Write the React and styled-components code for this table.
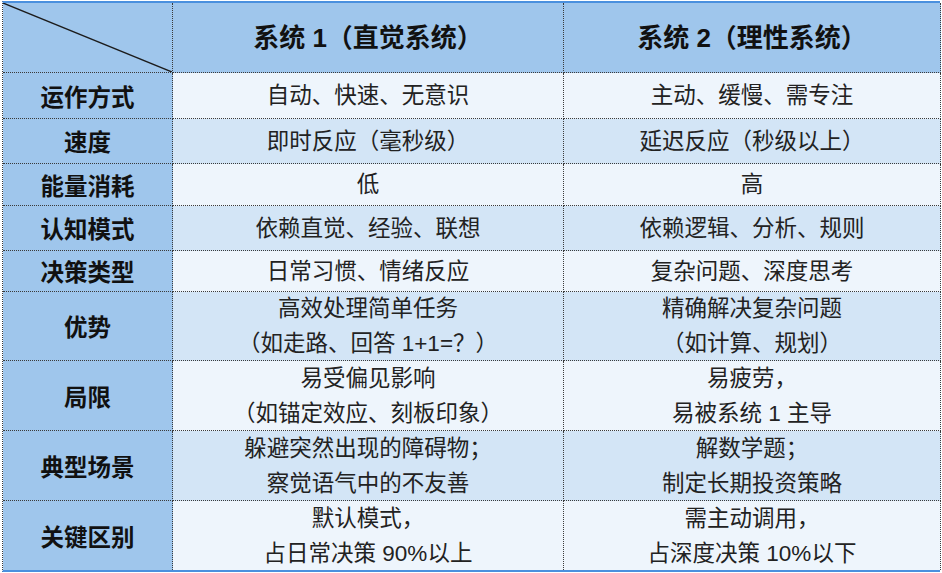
import React from "react";
import styled, { createGlobalStyle } from "styled-components";

const rows = [
	{ label: "运作方式", h: 46, a: ["自动、快速、无意识"], b: ["主动、缓慢、需专注"] },
	{ label: "速度", h: 45, a: ["即时反应（毫秒级）"], b: ["延迟反应（秒级以上）"] },
	{ label: "能量消耗", h: 42, a: ["低"], b: ["高"] },
	{ label: "认知模式", h: 45, a: ["依赖直觉、经验、联想"], b: ["依赖逻辑、分析、规则"] },
	{ label: "决策类型", h: 41, a: ["日常习惯、情绪反应"], b: ["复杂问题、深度思考"] },
	{ label: "优势", h: 69, a: ["高效处理简单任务", "（如走路、回答 1+1=？）"], b: ["精确解决复杂问题", "（如计算、规划）"] },
	{ label: "局限", h: 70, a: ["易受偏见影响", "（如锚定效应、刻板印象）"], b: ["易疲劳，", "易被系统 1 主导"] },
	{ label: "典型场景", h: 70, a: ["躲避突然出现的障碍物；", "察觉语气中的不友善"], b: ["解数学题；", "制定长期投资策略"] },
	{ label: "关键区别", h: 69, a: ["默认模式，", "占日常决策 90%以上"], b: ["需主动调用，", "占深度决策 10%以下"] },
];

function App() {
	return (
		<>
			<GlobalStyle />
			<Page>
				<Table $rows={[70, ...rows.map((r) => r.h)].map((h) => `${h}px`).join(" ")}>
					<Corner>
						<Diagonal viewBox="0 0 100 100" preserveAspectRatio="none">
							<line x1="0" y1="0" x2="100" y2="100" stroke="#1c1c1c" strokeWidth="1.4" vectorEffect="non-scaling-stroke" />
						</Diagonal>
					</Corner>
					<HeadCell>系统 1（直觉系统）</HeadCell>
					<HeadCell>系统 2（理性系统）</HeadCell>
					{rows.map((r, i) => {
						const light = i % 2 === 0;
						const last = i === rows.length - 1;
						return (
							<React.Fragment key={r.label}>
								<Label $bottom={last}>{r.label}</Label>
								<Cell $light={light} $bottom={last}>
									{r.a.map((t) => (
										<Line key={t}>{t}</Line>
									))}
								</Cell>
								<Cell $light={light} $bottom={last}>
									{r.b.map((t) => (
										<Line key={t}>{t}</Line>
									))}
								</Cell>
							</React.Fragment>
						);
					})}
				</Table>
			</Page>
		</>
	);
}

const GlobalStyle = createGlobalStyle`
	body {
		margin: 0;
		background: #fff;
		font-family: "Liberation Sans", "Noto Sans CJK SC", sans-serif;
	}
`;
const Page = styled.div`
	padding: 1px 0 0 2px;
`;
const Table = styled.div`
	width: 938px;
	display: grid;
	grid-template-columns: 170px 391px 377px;
	grid-template-rows: ${(p) => p.$rows};
	border-top: 2px solid #4a90de;
	border-bottom: 2px solid #4a90de;
	border-left: 1px dotted #3a3a3a;
	box-sizing: border-box;
`;
const BaseCell = styled.div`
	box-sizing: border-box;
	display: flex;
	flex-direction: column;
	align-items: center;
	justify-content: center;
	border-right: 1px dotted #3a3a3a;
	border-bottom: ${(p) => (p.$bottom ? "none" : "1px dotted #3a3a3a")};
	color: #1a1a1a;
`;
const Corner = styled(BaseCell)`
	position: relative;
	background: #9fc6ec;
`;
const Diagonal = styled.svg`
	position: absolute;
	inset: 0;
	width: 100%;
	height: 100%;
`;
const HeadCell = styled(BaseCell)`
	background: #9fc6ec;
	font-size: 26px;
	font-weight: 700;
	color: #111;
	padding-bottom: 4px;
`;
const Label = styled(BaseCell)`
	background: #9fc6ec;
	font-size: 23.5px;
	font-weight: 700;
	color: #111;
`;
const Cell = styled(BaseCell)`
	background: ${(p) => (p.$light ? "#eef5fc" : "#d3e5f6")};
	font-size: 22.5px;
	color: #222;
`;
const Line = styled.span`
	line-height: 35px;
	white-space: nowrap;
`;

export default App;
